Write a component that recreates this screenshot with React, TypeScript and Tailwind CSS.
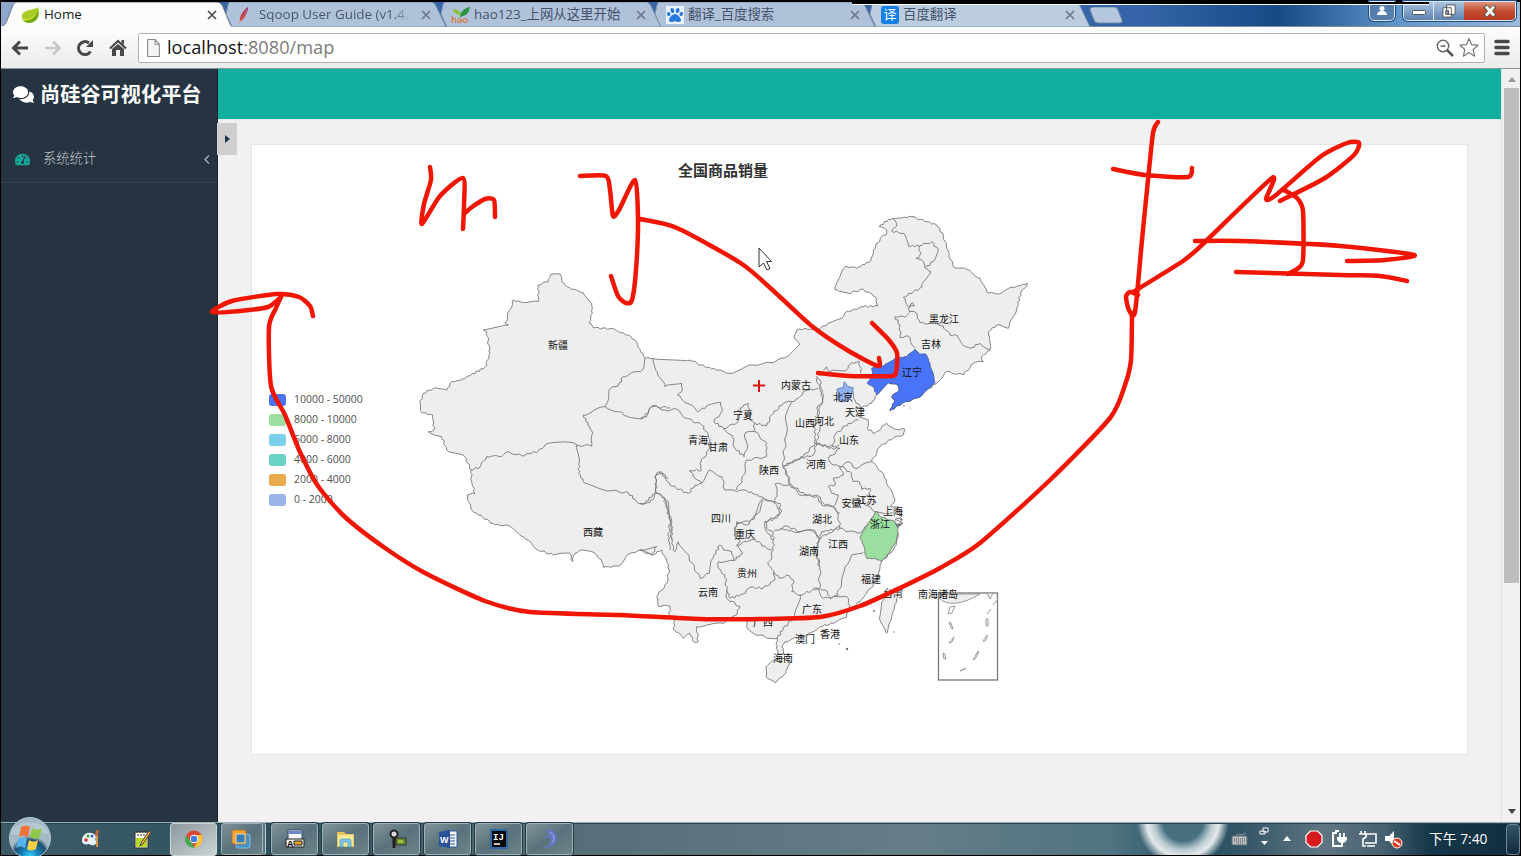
import React from "react";
import { FaComments, FaTachometerAlt, FaPaw } from "react-icons/fa";

type Pt = [number, number];

const at = (ox: number, oy: number, data: string): Pt[] =>
  data.trim().split(/\s+/).map((p) => {
    const [x, y] = p.split(",").map(Number);
    return [ox + x / 3, oy + y / 3] as Pt;
  });

/* Adds small, repeatable irregularities so borders look surveyed rather than straight. */
const rough = (pts: Pt[], amp = 1.1): string => {
  const out: string[] = [];
  pts.forEach((p, i) => {
    out.push(p[0].toFixed(1) + " " + p[1].toFixed(1));
    const q = pts[i + 1];
    if (!q) return;
    const dx = q[0] - p[0];
    const dy = q[1] - p[1];
    const len = Math.hypot(dx, dy);
    const n = Math.floor(len / 2.2);
    for (let k = 1; k < n; k++) {
      const t = k / n;
      const s = Math.sin((p[0] + dx * t) * 12.9 + (p[1] + dy * t) * 78.2) * amp;
      out.push((p[0] + dx * t - (dy / len) * s).toFixed(1) + " " + (p[1] + dy * t + (dx / len) * s).toFixed(1));
    }
  });
  return "M" + out.join("L");
};

/* Gentle spline through the recorded pen positions. */
const pen = (data: string, k = 0.12): string => {
  const p = data.trim().split(/\s+/).map((s) => s.split(",").map(Number));
  let d = `M${p[0][0]} ${p[0][1]}`;
  for (let i = 0; i < p.length - 1; i++) {
    const a = p[i - 1] || p[i];
    const b = p[i];
    const c = p[i + 1];
    const e = p[i + 2] || c;
    d += `C${b[0] + (c[0] - a[0]) * k} ${b[1] + (c[1] - a[1]) * k} ${c[0] - (e[0] - b[0]) * k} ${c[1] - (e[1] - b[1]) * k} ${c[0]} ${c[1]}`;
  }
  return d;
};

const W = (d: string) => at(410, 260, d);
const C = (d: string) => at(640, 340, d);
const N = (d: string) => at(780, 200, d);
const E = (d: string) => at(780, 370, d);
const S = (d: string) => at(640, 500, d);
const T = (d: string) => at(780, 530, d);

const outline: Pt[] = [
  ...W("420,45 450,42 455,65 485,88 520,98 545,130 547,160 537,188 550,203 600,206 640,218 675,240 690,268 705,295"),
  ...C("40,55 150,60 195,80 235,90 270,100 330,75 400,68 440,50"),
  ...N("58,435 42,408 50,390 75,385 110,390 150,368 185,355 195,338 250,320 293,318 285,290 250,268 205,280 165,270 180,230 198,198 230,205 272,182 280,150 305,110 318,105 320,90 298,80 325,58 395,50 440,65 470,75 490,105 500,145 520,200 560,208 600,235 620,275 650,282 700,262 742,250 722,280 712,320 685,385 650,375 625,395 630,450 605,470 610,485 580,490 550,525 500,515 465,553 440,570 418,592 370,608 330,632 345,600 335,590 358,570 350,552 325,548 290,585"),
  ...E("275,100 240,115 228,110 235,140 265,150 262,175 285,190 320,160 350,178 375,178 370,195 345,200 300,230 275,275 310,310 325,350 345,390 330,410 360,420 365,440 345,450 368,458 350,475 355,500 345,530 330,550 305,575"),
  ...T("300,105 290,150 260,190 240,215 205,240 200,262 160,280 120,290 80,315 40,325 15,335 5,350"),
  ...S("435,465 415,460 408,430 412,415 390,415 340,400 320,380 322,365 280,350 250,370 200,375 170,380 175,425 160,425 150,400 130,415 100,385 105,360 88,345 90,318 55,318 50,290 80,250 88,210 80,180 65,150 40,165 0,150"),
  ...W("740,860 725,885 690,870 660,880 625,918 580,922 575,900 555,880 510,870 495,880 488,905 480,880 430,885 385,870 340,830 290,795 255,795 200,760 182,745 172,705 195,700 185,665 183,630 165,590 110,570 95,530 55,515 72,510 68,465 35,458 30,430 40,400 70,385 110,390 125,365 150,362 225,322 240,280 230,215 220,210 295,195 285,190 310,120 340,128 385,125 385,75 415,65 420,45"),
];

const borders: Pt[][] = [
  W("705,295 697,330 640,350 625,378 603,383 585,440 520,465 548,520 545,558 500,555 465,545 405,555 385,573 335,587 295,575 275,590 230,590 210,622 183,630"),
  W("500,555 508,600 506,640 525,670 600,692 655,698 685,730 720,728 738,700 735,650 748,635 775,655"),
  W("738,700 760,710 770,745 780,780 775,840 780,870"),
  W("585,440 625,455 650,468 700,475 725,440 780,443"),
  C("0,237 20,230 38,197 75,210 110,208 140,235 185,255 205,285 210,325 180,370 185,390 148,392 165,415 185,430 165,435 145,460 90,435 62,395 48,405 48,455 15,490 0,490"),
  C("48,455 75,475 92,530 95,600"),
  C("185,430 208,390 245,410 255,450 290,455 320,452 380,478"),
  C("40,55 52,95 75,140 125,130 125,155 112,165 175,215 200,198 243,188 245,215 222,245 250,265 290,250 300,205 325,190 330,240 345,250"),
  C("250,265 275,285 285,325 312,350 322,325 315,280 345,275 380,310 378,350 320,360 315,400 290,450"),
  C("345,250 340,275"),
  C("345,250 380,258 395,225 430,190 455,185 475,175 490,155 520,150 535,145"),
  C("455,185 440,220 438,290 428,375 440,405 450,435 405,432 410,460 405,490 370,475 330,545 290,550 285,600"),
  C("430,378 480,355 520,345 530,310 540,260 530,205 548,180 540,120 530,108"),
  C("530,310 580,328 598,315"),
  C("450,435 480,465 530,470 545,495 580,500 600,520"),
  C("405,490 425,515 410,535 375,545 380,575 400,600"),
  S("400,95 440,78 480,95 525,92 535,115 530,160 540,200 538,265"),
  S("380,0 420,10 418,45 375,65 385,90 400,100 400,150 385,195 402,215 405,240 370,265 330,262 310,282 270,295 260,270 255,225 235,205 235,185 280,182 308,160 290,135 320,125 345,118 380,145 395,150"),
  S("402,215 418,235 440,225 460,240 455,275 480,285 465,350 430,385 412,415"),
  S("370,0 355,40 320,75 290,65 282,105 300,120 290,135"),
  S("80,0 95,70 95,130 105,155 115,125 140,160 180,235 208,220 212,185 240,135 250,150 275,155 280,182"),
  S("260,270 260,295 300,320 290,345 275,355"),
  S("480,285 535,265 550,295 595,290"),
  S("600,80 565,100 535,115"),
  N("340,58 350,78 335,93 370,100 385,138 418,138 455,125 475,150 460,185 435,203 425,180 408,175 420,165 418,138"),
  N("435,203 452,215 435,240 425,262 370,292 385,320 403,318 398,308 385,325 388,335 410,340 420,368 450,370 490,378 510,405 530,405 545,430 570,445 600,430 630,448"),
  N("388,338 375,352 345,350 360,375 360,412 385,408 405,445"),
  N("130,510 140,500 150,515 200,510 215,488 238,485 243,520"),
  E("110,25 120,55 130,80 105,165 105,220 70,260 10,290 35,345 75,375 115,378 130,400 160,410"),
  E("105,220 140,228 160,230 165,195 205,160 235,150"),
  E("160,230 180,235 145,265 160,285 185,290 205,275 225,295 275,275"),
  E("180,290 190,315 160,325 165,345 145,350 155,370 175,375 160,410 175,440 180,475 125,485 115,500 90,480 40,485 0,475"),
  E("185,290 215,310 220,335 238,335 245,358 270,355 270,375 250,385 255,405 290,425 265,460 240,490"),
  E("180,475 205,485 240,490"),
  E("290,425 330,430 355,420"),
  E("120,500 105,535 118,590"),
  E("218,60 220,85 240,110"),
  T("250,68 215,75 195,110 185,155 172,195 155,205 135,180 100,175"),
  T("172,195 205,205 207,235"),
];

const liaoning = rough(N("275,505 310,498 345,475 380,470 405,448 418,463 437,462 450,490 465,548 440,570 418,592 370,608 330,632 345,600 335,590 358,570 350,552 325,548 290,585 280,560 262,550 278,530 275,505"), 0.5);
const zhejiang = rough(E("290,423 300,440 345,455 355,475 350,510 330,545 305,575 285,565 260,565 250,525 240,500 262,465 290,423"), 0.5);
const beijing = rough(E("193,35 202,48 220,53 215,75 205,92 185,95 172,88 175,70 170,58 190,52 193,35"), 0.3);
const hainan = rough(S("400,480 430,475 450,483 437,520 405,548 378,530 378,500 400,480"), 0.5);
const taiwan = rough(T("350,180 353,200 335,260 320,310 298,265 305,215 325,185 350,180"), 0.4);

const labels: [string, number, number][] = [
  ["新疆", 558, 345], ["西藏", 593, 532], ["内蒙古", 796, 385], ["黑龙江", 944, 319], ["吉林", 931, 344],
  ["辽宁", 912, 372], ["北京", 843, 397], ["天津", 855, 412], ["宁夏", 743, 415], ["山西", 805, 423],
  ["河北", 824, 421], ["山东", 849, 440], ["青海", 698, 440], ["甘肃", 718, 447], ["陕西", 769, 470],
  ["河南", 816, 464], ["安徽", 851.5, 503], ["江苏", 866.5, 500], ["上海", 893, 511], ["浙江", 880, 524],
  ["四川", 721, 518], ["湖北", 822, 519], ["重庆", 745, 534], ["湖南", 809, 551], ["江西", 838, 544],
  ["贵州", 747, 573], ["云南", 708, 592], ["福建", 871, 579], ["广东", 812, 609], ["广西", 763, 622],
  ["台湾", 893, 593], ["香港", 830, 634], ["澳门", 805, 639], ["海南", 783, 658], ["南海诸岛", 938, 594],
];

const legend: [string, string][] = [
  ["bg-[#4a74f8]", "10000 - 50000"],
  ["bg-[#9adf9f]", "8000 - 10000"],
  ["bg-[#7ad0ea]", "6000 - 8000"],
  ["bg-[#69d2c4]", "4000 - 6000"],
  ["bg-[#e7a94c]", "2000 - 4000"],
  ["bg-[#9ab2e8]", "0 - 2000"],
];

function ChinaMap() {
  return (
    <svg viewBox="252 145 1215 609" className="col-start-1 row-start-1 h-[609px] w-[1215px]">
      <g fill="#eee" stroke="#7c7c7c" strokeWidth="0.95" strokeLinejoin="round">
        <path d={rough(outline, 0.9) + "Z"} />
        <path d={hainan} />
        <path d={taiwan} />
        {borders.map((b, i) => <path key={i} d={rough(b)} fill="none" />)}
        <path d={liaoning} fill="#4a74f8" stroke="#4660a8" />
        <path d={zhejiang} fill="#9adf9f" />
        <path d={beijing} fill="#8fb0ec" stroke="#6f87b8" />
      </g>
      <g fill="#777">
        <circle cx="904" cy="406" r=".8" /><circle cx="910" cy="408" r=".6" />
        <circle cx="874" cy="611" r="1" /><circle cx="894" cy="632" r=".7" />
        <circle cx="847" cy="649" r="1.2" /><circle cx="839" cy="644" r=".8" />
        <path d="M895 524l7-1-4 5zM900 518l3 1-2 3z" />
      </g>
      <g fill="none" stroke="#999" strokeWidth="1">
        <rect x="938.5" y="593" width="59" height="87" stroke="#777" strokeWidth="1.3" />
        <path d="M939 598C946 606 962 605 980 594H939zM987 593l3 6 3-6z" fill="#eee" />
        <path d="M950 607l5-1-3 7-4 1zM949 622l2 1 2 6-2-1zM949 643l5-6-2 5zM943 653l2 1 1 5h-2zM960 671l6-3-1 1zM973 660l5-9 1 1-4 7zM983 641l4-6v3l-2 3zM986 619h2v7h-2zM987 614l4-5M993 605l5-6" />
      </g>
      <g fontSize="10" fill="#111" textAnchor="middle" className="font-['Noto_Sans_CJK_SC',sans-serif]">
        {labels.map(([t, x, y]) => <text key={t} x={x} y={y + 3.7}>{t}</text>)}
      </g>
      <path d="M753 385.5h12M759 380v12" stroke="#e01010" strokeWidth="2" />
      <path d="M759 248v19l4.500-4 3.500 7 3-1.500-3.500-7h5z" fill="#fff" stroke="#333" strokeWidth="1" />
    </svg>
  );
}

function Leaf() {
  return (
    <svg width="19" height="18" viewBox="0 0 19 18">
      <path d="M17 1C15 4 3 3 1 9c-1 5 3 8 7 8 8 0 12-7 9-16Z" fill="#a9cc22" />
      <path d="M2 15C9 15 14 11 17 5c2 6-3 12-10 12z" fill="#78a915" />
      <path d="M2 13c5 2 10-1 13-5" stroke="#e5ec4a" fill="none" />
    </svg>
  );
}
function Feather() {
  return (
    <svg width="18" height="18" viewBox="0 0 18 18">
      <path d="M11 1C6 4 2 11 3 15c4-1 7-7 8-14Z" fill="#c93646" />
      <path d="M11 1C8 4 6 8 5 12c3-3 6-6 6-11Z" fill="#8c3d86" />
      <path d="M2 17 10 4" stroke="#e77a42" strokeWidth=".8" />
    </svg>
  );
}
function Hao() {
  return (
    <svg className="overflow-visible" width="18" height="18" viewBox="0 0 18 18">
      <path d="M9 9C8 5 5 3 1 3c1 4 4 6 8 6Z" fill="#86bf38" />
      <path d="M8 11c0-5 4-9 10-10-1 6-4 9-10 10Z" fill="#2e9346" />
      <text x="-1" y="17" fontSize="9.500" fontWeight="600" fill="#dc7433" className="font-['Open_Sans',sans-serif]">hao</text>
    </svg>
  );
}
function Baidu() {
  return <span className="flex h-[18px] w-[18px] items-center justify-center bg-[#e9f3fc]"><FaPaw size={16} color="#2878dc" /></span>;
}
function Translate() {
  return <span className="flex h-[18px] w-[18px] items-center justify-center rounded-[3px] bg-[#157fe4] text-[13px] leading-none text-white">译</span>;
}
function Cross({ color }: { color: string }) {
  return <svg className="shrink-0" width="10" height="10" viewBox="0 0 10 10"><path d="M1 1l8 8M9 1L1 9" stroke={color} strokeWidth="1.7" /></svg>;
}

const tabs: { title: string; icon: React.ReactNode; width: string }[] = [
  { title: "Home", icon: <Leaf />, width: "w-[218px]" },
  { title: "Sqoop User Guide (v1.4.", icon: <Feather />, width: "w-[215px]" },
  { title: "hao123_上网从这里开始", icon: <Hao />, width: "w-[214px]" },
  { title: "翻译_百度搜索", icon: <Baidu />, width: "w-[215px]" },
  { title: "百度翻译", icon: <Translate />, width: "w-[214px]" },
];

function TabBar() {
  return (
    <div className="flex h-[27px] shrink-0 border-t-2 border-black bg-[linear-gradient(90deg,#8fa9cb_0,#3866a5_14%,#3565a8_75%,#164a86_84%,#6295cb_92%,#9cb9d9)] pl-[7px] shadow-[inset_0_-1px_#80909f]">
      {tabs.map((t, i) => (
        <div key={t.title} className={`${t.width} grid shrink-0`}>
          <svg className="col-start-1 row-start-1 -ml-[7px] h-[25px] w-[234px]" viewBox="0 0 234 25">
            <path d={i === 0 ? "M0 25C5 24 6 21 8 16L13 3Q14 0 17 0H216Q221 0 223 5L230 22Q231 25 234 25Z" : "M12 0H213Q216 0 218 4L228 25H14L8 12L10 3Q11 0 12 0Z"} fill={i === 0 ? "#fcfcfc" : i > 3 ? "#bdcde0" : "#b0c2da"} stroke={i === 0 ? "#68788b" : "#7d92ad"} strokeWidth="1" />
            {i === 0 && <path d="M1 25H233" stroke="#fcfcfc" strokeWidth="2" />}
          </svg>
          <div className={`z-10 col-start-1 row-start-1 flex items-center gap-[4px] text-[13.4px] ${i === 0 ? "pl-[14px] text-[#202020]" : "pl-[12px] text-[#44536b]"}`}>
            {t.icon}
            <span className={`${i === 1 ? "bg-gradient-to-r from-[#44536b] from-90% to-[#aebfd5] bg-clip-text text-transparent" : ""} ${i === 0 ? "w-[151px]" : "w-[150px]"} overflow-hidden whitespace-nowrap`}>{t.title}</span>
            <span className="ml-[8px]"><Cross color={i === 0 ? "#4c4c4c" : "#6c7888"} /></span>
          </div>
        </div>
      ))}
      <svg className="mt-[5px] ml-[6px] h-[17px] w-9" viewBox="0 0 36 17"><path d="M1 3Q1 0 4 0H25Q28 0 29 3L33 13Q34 16 30 16H9Q6 16 5 13Z" fill="#b5c6df" stroke="#7187a3" /></svg>
      <div className="ml-auto flex items-start pr-[5px]">
        <div className="-mt-px mr-2 flex h-[20px] w-[26px] items-center justify-center rounded-b-[5px] border border-[#dbe7f4] bg-[#557eae] shadow-[0_0_0_1px_#234d7c]">
          <svg width="14" height="14" viewBox="0 0 14 14"><circle cx="7" cy="4.500" r="2.500" fill="#fff" /><path d="M2 11q0-4 5-4t5 4z" fill="#fff" /></svg>
        </div>
        <div className="-mt-px flex h-[20px] overflow-hidden rounded-b-[5px] border border-[#dbe7f4] shadow-[0_0_0_1px_#234d7c]">
          <div className="flex w-[30px] items-center justify-center border-r border-[#dbe7f4] bg-gradient-to-b from-[#adc4de] to-[#5c83b2]"><svg className="mt-[3px]" width="14" height="6"><rect x=".5" y=".5" width="13" height="4" rx="1" fill="#fff" stroke="#555" /></svg></div>
          <div className="flex w-[30px] items-center justify-center bg-gradient-to-b from-[#adc4de] to-[#5c83b2]"><svg width="14" height="14" viewBox="0 0 15 15"><path d="M5 1h9v10H5zM1 4h9v10H1z" fill="#fff" stroke="#555" /><path d="M4 7h3v4H4z" fill="#7e98b8" stroke="#555" /></svg></div>
          <div className="flex w-[51px] items-center justify-center bg-gradient-to-b from-[#dc9480] via-[#c44a2f] to-[#b93a20]"><svg width="14" height="12" viewBox="0 0 14 12"><path d="M2 1l10 10M12 1L2 11" stroke="#554" strokeWidth="4.500" /><path d="M3 1.500l8 9M11 1.500l-8 9" stroke="#fff" strokeWidth="2.700" /></svg></div>
        </div>
      </div>
    </div>
  );
}

function Toolbar() {
  return (
    <div className="flex h-[42px] shrink-0 items-center border-b border-[#8c9797] bg-gradient-to-b from-[#fdfdfd] to-[#ebebeb] pl-[11px]">
      <svg width="18" height="16" viewBox="0 0 18 16"><path d="M9 1.500L2.500 8 9 14.500M3 8h14" fill="none" stroke="#484848" strokeWidth="3" /></svg>
      <svg className="ml-[15px]" width="18" height="16" viewBox="0 0 18 16"><path d="M9 1.500L15.500 8 9 14.500M15 8H1" fill="none" stroke="#c8c8c8" strokeWidth="2.700" /></svg>
      <svg className="ml-[14px]" width="18" height="18" viewBox="0 0 18 18"><path d="M14.500 12.500A6.500 6.500 0 1 1 13 4" fill="none" stroke="#484848" strokeWidth="3" /><path d="M17 1v7h-7z" fill="#484848" /></svg>
      <svg className="ml-[15px]" width="18" height="18" viewBox="0 0 18 18"><path d="M1 9.500L9 2l8 7.500" fill="none" stroke="#484848" strokeWidth="2.200" /><path d="M12.500 1H15v5l-2.500-2zM3 10l6-5 6 5v7h-4v-6H7v6H3z" fill="#484848" /></svg>
      <div className="ml-[11px] flex h-[30px] w-[1347px] items-center rounded-[2px] border border-[#b2b2b2] bg-white pl-[8px] pr-[5px] font-['Open_Sans',sans-serif] text-[18.200px]">
        <svg width="13" height="18" viewBox="0 0 12 17"><path d="M.5.5h7L11.500 5v11.500H.5zM7.500.5V5h4" fill="#f4f4f4" stroke="#858585" /></svg>
        <span className="ml-[7px] text-[#151515]">localhost<span className="text-[#7b7b7b]">:8080/map</span></span>
        <svg className="ml-auto" width="18" height="18" viewBox="0 0 18 18"><circle cx="7" cy="7" r="5.700" fill="none" stroke="#666" strokeWidth="1.500" /><path d="M11 11l6 6" stroke="#555" strokeWidth="2.500" /><path d="M4.500 7h5" stroke="#666" strokeWidth="1.500" /></svg>
        <svg className="ml-[5px]" width="20" height="22" viewBox="0 0 20 22"><path d="M10 1.500l2.600 6.200 6.400.5-4.800 4.300 1.400 6.700L10 15.600l-5.600 3.600 1.400-6.700L1 8.200l6.400-.5z" fill="#fff" stroke="#777" strokeWidth="1.200" strokeLinejoin="round" /></svg>
      </div>
      <svg className="ml-[9px]" width="16" height="17" viewBox="0 0 16 17"><path d="M2 2.500h12M2 8.500h12M2 14.500h12" stroke="#484848" strokeWidth="3.500" strokeLinecap="round" /></svg>
    </div>
  );
}

function TaskIcon({ kind }: { kind: string }) {
  return (
    <svg width="20" height="20" viewBox="0 0 20 20">
      {kind === "paint" && <><path d="M1 12C1 5 7 2 13 5c4 3 0 5 2 7 1 5-4 5-7 3-4 1-7 0-7-3Z" fill="#e9f2f6" /><circle cx="5" cy="11" r="1.800" fill="#d33" /><circle cx="7" cy="7" r="1.500" fill="#49a544" /><circle cx="11" cy="7" r="1.500" fill="#46b" /><path d="M16 6v12" stroke="#d99142" strokeWidth="2" /><path d="M14 6l1-5h3l-1 6z" fill="#b7653b" /></>}
      {kind === "note" && <><path d="M3 3h13v16H3z" fill="#f7f8ee" stroke="#333" /><path d="M4 9h11v9H4z" fill="#b6d928" /><path d="M4 3h12M5 6h9" stroke="#333" strokeDasharray="2 1" /><path d="M9 14L17 2l2 1-8 12-3 2z" fill="#f0b72c" stroke="#544" /></>}
      {kind === "chrome" && <><circle cx="10" cy="10" r="8.500" fill="#dc4738" /><path d="M2 6l5 7 4 5.500A8.500 8.500 0 0 1 2 6" fill="#47a853" /><path d="M10 6h7.600A8.500 8.500 0 0 1 10 18.500l4-7z" fill="#f4c63b" /><circle cx="10" cy="10" r="4.200" fill="#fff" /><circle cx="10" cy="10" r="3.300" fill="#3f7de0" /></>}
      {kind === "vm" && <><rect x="5" y="5" width="14" height="14" rx="2" fill="#4293ca" stroke="#a9d4ee" strokeWidth=".7" /><rect x="1" y="1" width="14" height="14" rx="2" fill="#f0a435" stroke="#b96b20" strokeWidth=".7" /><rect x="5" y="5" width="9" height="9" fill="#357fb7" stroke="#f6d79e" /></>}
      {kind === "form" && <><path d="M3 1h14v10H3z" fill="#f3f5f6" stroke="#374c76" /><path d="M3 2h14v3H3z" fill="#6d8ac4" /><path d="M1 10h18v8H1z" fill="#eee" stroke="#222" /><path d="M9 12h8v4H9z" fill="#e6a52b" stroke="#222" /><text x="2" y="18" fontSize="9" fontWeight="700" className="font-['Liberation_Sans',sans-serif]">A</text></>}
      {kind === "folder" && <><path d="M1 3h7l2 2h8v13H1z" fill="#e8c65e" /><path d="M2 6h15v11H2z" fill="#fae99a" /><path d="M4 18v-6q0-2 2-2h7q2 0 2 2v6h-3v-5H7v5z" fill="#7bc7eb" stroke="#3898be" strokeWidth=".6" /></>}
      {kind === "key" && <><circle cx="7" cy="5" r="3.500" fill="#ddd" stroke="#222" strokeWidth="2" /><path d="M7 8v11" stroke="#222" strokeWidth="3" /><path d="M9 9h10v7H9z" fill="#648c30" stroke="#333" /><path d="M11 11h5v3h-5z" fill="#a1be3a" /></>}
      {kind === "word" && <><path d="M9 2h10v16H9z" fill="#f5f8fd" stroke="#2d599d" /><path d="M11 6h6M11 9h6M11 12h6M11 15h6" stroke="#2d599d" /><path d="M1 3l11-2v18L1 17z" fill="#285497" /><text x="2" y="14" fontSize="9" fontWeight="700" fill="#fff" className="font-['Liberation_Sans',sans-serif]">W</text></>}
      {kind === "idea" && <><rect x="1" y="0" width="18" height="20" fill="#2d69a4" /><rect x="3" y="2" width="14" height="16" fill="#080808" /><text x="4" y="11" fontSize="9" fontWeight="700" fill="#fff" className="font-['Liberation_Mono',monospace]">IJ</text><path d="M5 15h6" stroke="#fff" strokeWidth="1.500" /></>}
      {kind === "dolphin" && <><path d="M5 2c6-3 12 1 12 7 0 6-6 10-14 10 4-2 8-4 8-8-1-3-4-3-7-1 1-3 4-3 5-5-1-2-2-2-4-3Z" fill="#6475c3" /><path d="M9 3c4 1 7 6 3 11" fill="none" stroke="#9cb0ee" /></>}
    </svg>
  );
}

const apps = ["vm", "form", "folder", "key", "word", "idea", "dolphin"];

function Taskbar() {
  return (
    <div className="relative flex h-[34px] shrink-0 items-center border-b border-t border-b-black border-t-[#9daeb5] bg-[radial-gradient(circle_at_1183px_-2px,#477080_0,#477080_20px,#bbcbd2_29px,#e5eaec_36px,transparent_46px),linear-gradient(90deg,#3d5b67_0,#2c535f_18%,#536c76_35%,#657d86_60%,#507481_73%,#214f60_79%,#375868_82%,#607582_87%,#466170_91%,#153749_94%,#122e40)] shadow-[inset_0_1px_#244852]">
      <svg className="absolute -top-[7px] left-[8px]" width="44" height="41" viewBox="0 0 44 41">
        <defs><radialGradient id="orb" cx="50%" cy="95%"><stop stopColor="#35d7fa" /><stop offset=".4" stopColor="#1682bd" /><stop offset=".8" stopColor="#214d6c" /><stop offset="1" stopColor="#a3b9c3" /></radialGradient></defs>
        <circle cx="22" cy="22" r="20.500" fill="url(#orb)" stroke="#aac4d2" />
        <path d="M3 18C6 3 38 2 41 19 29 14 15 22 3 18Z" fill="#cbdbe2" opacity=".45" />
        <path d="M13 11q5-3 9 0l-2 10q-5-3-9 0z" fill="#ef7338" /><path d="M24 12q5 3 10 0l-3 10q-5 2-9-1z" fill="#8fc84d" />
        <path d="M10 23q5-3 9 0l-2 9q-5-3-9 0z" fill="#57b4eb" /><path d="M21 24q5 3 9 0l-2 9q-5 3-9 0z" fill="#f6cf45" />
      </svg>
      <div className="ml-[81px]"><TaskIcon kind="paint" /></div>
      <div className="ml-[31px]"><TaskIcon kind="note" /></div>
      <div className="ml-[18px] flex h-[33px] w-[47px] items-center justify-center rounded-[3px] border border-[#cbd4d7] bg-gradient-to-br from-[#8c999e] to-[#ccd3d5]"><TaskIcon kind="chrome" /></div>
      <div className="ml-[4px] flex gap-[4px]">
        {apps.map((a, i) => (
          <div key={a} className={`${i === 0 ? "mr-1 w-[42px] pr-[2px] shadow-[2px_0_0_#647780,3px_0_0_#bac5ca]" : "w-[47px] shadow-[0_0_0_1px_#243a43]"} flex h-[32px] items-center justify-center rounded-[3px] border border-[#9fb0b7] bg-gradient-to-br from-[#82949b] via-[#5a727b] to-[#6c838b]`}><TaskIcon kind={a} /></div>
        ))}
      </div>
      <div className="ml-auto flex h-full items-center text-white">
        <svg width="17" height="16" viewBox="0 0 17 16"><rect x="1" y="5" width="15" height="9" rx="1" fill="#b9bec0" stroke="#606a70" /><path d="M3 8h11M3 10h11M5 12h7" stroke="#555" strokeDasharray="1 1" /><path d="M5 5q1-3 6-1l4-2" stroke="#8a9499" fill="none" /></svg>
        <svg className="ml-[10px]" width="13" height="26" viewBox="0 0 13 26"><path d="M5 2h5v4H5zM2 5h5v3H2z" fill="#356" stroke="#fff" /><path d="M3 15h7l-3.500 4z" fill="#fff" /></svg>
        <svg className="ml-[11px]" width="10" height="6"><path d="M5 0l4 5H1z" fill="#fff" /></svg>
        <svg className="ml-[12px]" width="20" height="20" viewBox="0 0 20 20"><path d="M6.500 2h7l4.500 4.500v7L13.500 18h-7L2 13.500v-7z" fill="#d71920" stroke="#fff" strokeWidth="1.200" /></svg>
        <svg className="ml-[6px]" width="18" height="18" viewBox="0 0 18 18"><path d="M7 3H3v13h6M5 1h4" fill="none" stroke="#fff" strokeWidth="2" /><path d="M10 3v4M14 3v4M12 11v5H8" stroke="#fff" strokeWidth="1.800" fill="none" /><path d="M7 7h10v2q-1 4-5 4T7 9z" fill="#fff" /></svg>
        <svg className="ml-[10px]" width="19" height="18" viewBox="0 0 19 18"><path d="M8 4h10v9H7M9 16h8M3 1v3M7 1v3M1 4h7v3L5 9v7h3" fill="none" stroke="#fff" strokeWidth="1.600" /></svg>
        <svg className="ml-[7px]" width="19" height="19" viewBox="0 0 19 19"><path d="M1 6h4l5-5v15l-5-5H1z" fill="#fff" /><circle cx="13" cy="13" r="5" fill="#dc3a25" stroke="#fff" /><path d="M10 11l6 4" stroke="#fff" strokeWidth="2" /></svg>
        <span className="ml-[26px] w-[59px] whitespace-nowrap text-[13.800px] leading-[18px]">下午 7:40</span>
        <div className="ml-[18px] mr-px h-[31px] w-[14px] rounded-sm border border-[#6d8798] bg-gradient-to-b from-[#365568] to-[#102a3c]" />
      </div>
    </div>
  );
}

const strokes = [
  "430,167 431,180 424,204 422,224 440,196 463,178 464,205 463,229",
  "464,214 472,207 485,199 494,200 495,217",
  "580,176 606,176 610,190 613,216 619,210 635,180 638,220 636,270 632,300 626,303 618,296 611,276",
  "640,219 677,228 742,264 780,297 813,327 847,350 878,366 879,358",
  "872,323 888,339 897,353 896,372 891,376 850,376 818,373",
  "1158,122 1153,133 1147,190 1142,240 1135,312 1129,310 1126,297 1130,292 1138,295",
  "1113,169 1145,175 1188,177 1192,168",
  "1133,292 1183,261 1205,242 1272,178 1266,199 1276,195 1320,157 1347,143 1359,143 1354,155 1325,178 1280,201",
  "1284,190 1297,198 1303,211 1303,260 1297,269 1288,274",
  "1195,241 1240,241 1340,246 1414,255 1385,260 1347,261",
  "1236,272 1340,275 1380,276 1407,281",
  "1132,313 1131,360 1125,385 1110,418 1050,480 980,543 940,568 900,588 860,606 820,617 760,619 700,619 620,615 530,612 485,601 425,573 385,548 345,517 318,486 300,452 285,415 271,386 269,327 276,308 281,297",
  "281,297 268,307 240,311 212,312 232,301 277,294 299,297 310,306 313,316",
];

function Ink() {
  return (
    <svg className="pointer-events-none absolute inset-0 z-30" width="1521" height="856" viewBox="0 0 1521 856">
      <g fill="none" stroke="#f01602" strokeWidth="4.500" strokeLinecap="round" strokeLinejoin="round">
        {strokes.map((s) => <path key={s} d={pen(s)} />)}
      </g>
    </svg>
  );
}

export default function App() {
  return (
    <div className="relative flex h-[856px] w-[1521px] flex-col overflow-hidden bg-[#f1f1f1] font-['Open_Sans','Noto_Sans_CJK_SC',sans-serif]">
      <TabBar />
      <Toolbar />
      <main className="flex h-[753px] min-h-0 flex-1">
        <aside className="w-[218px] shrink-0 border-r border-[#17222b] bg-[#263442]">
          <div className="flex h-[50px] items-center pl-[13px] font-['Noto_Sans_CJK_SC',sans-serif] text-[20.200px] font-bold text-white"><FaComments size={21} className="mr-[6px]" />尚硅谷可视化平台</div>
          <div className="mt-[15px] flex h-[49px] items-center border-b border-[#30434d] pt-[2px] pl-[15px] pr-[7px] text-[13.300px] font-light text-[#c2c6ca]"><FaTachometerAlt size={15} color="#16aa98" /><span className="ml-[13px]">系统统计</span><svg className="ml-auto" width="6" height="9" viewBox="0 0 6 9"><path d="M5 .5L1 4.500l4 4" fill="none" stroke="#a9b0b5" strokeWidth="1.300" /></svg></div>
        </aside>
        <section className="flex min-w-0 flex-1 flex-col">
          <header className="h-[50px] shrink-0 bg-[#0fae9f]" />
          <div className="flex min-h-0 flex-1 border-t border-[#dcebe8]">
            <button className="-ml-px mt-[3px] flex h-[32px] w-[20px] items-center justify-center bg-[#cfcfcf]"><svg width="5" height="8"><path d="M0 0l5 4-5 4z" fill="#1b3545" /></svg></button>
            <div className="mt-[24px] ml-[14px] grid h-[611px] w-[1217px] border border-[#e4e6e6] bg-white">
              <ChinaMap />
              <div className="z-10 col-start-1 row-start-1 flex flex-col">
                <h1 className="ml-[426px] mt-[14px] w-fit font-['Noto_Sans_CJK_SC',sans-serif] text-[15px] leading-[22px] font-bold text-[#333]">全国商品销量</h1>
                <ul className="mt-[209px] ml-[17px] w-fit">
                  {legend.map(([c, t]) => <li key={t} className="flex h-5 items-center gap-[8px] text-[10.500px] text-[#505050]"><span className={`${c} h-[12px] w-[17px] rounded-[3px]`} />{t}</li>)}
                </ul>
              </div>
            </div>
          </div>
        </section>
        <div className="flex w-[20px] shrink-0 flex-col items-center border-l border-[#e1e1e1] bg-[#f1f1f1]">
          <svg className="mt-[8px]" width="8" height="5"><path d="M4 0l4 5H0z" fill="#999" /></svg>
          <div className="mt-[6px] h-[495px] w-[15px] bg-[#bdbdbd]" />
          <svg className="mt-auto mb-[8px]" width="8" height="5"><path d="M0 0h8L4 5z" fill="#444" /></svg>
        </div>
      </main>
      <Taskbar />
      <div className="pointer-events-none absolute inset-0 z-20 border-x border-black" />
      <Ink />
      <div className="absolute left-[852px] top-[2px] h-[3px] w-[577px] border-b border-white bg-black" />
    </div>
  );
}
